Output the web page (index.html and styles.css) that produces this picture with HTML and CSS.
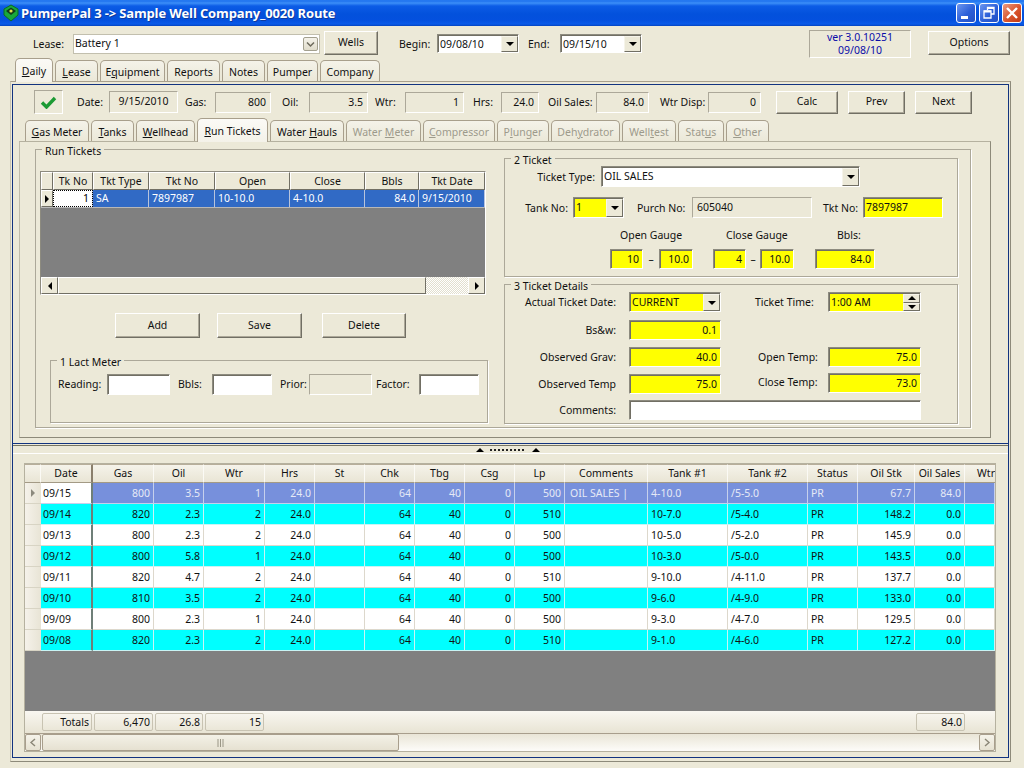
FILE: index.html
```html
<!DOCTYPE html>
<html lang="en">
<head>
<meta charset="utf-8">
<title>PumperPal 3</title>
<link rel="stylesheet" href="styles.css">
</head>
<body>
<div class="app">
  <header class="titlebar">
    <svg class="appicon" width="16" height="18" viewBox="0 0 16 18"><path d="M8 1 15 5 15 11 8 17 1 11 1 5Z" fill="#18a83c" stroke="#0b6b24"/><path d="M8 3.5 13 7 8 11 3 7Z" fill="#123a1a"/><circle cx="8" cy="7" r="1.6" fill="#e8e04a"/></svg>
    <span class="title">PumperPal 3 -&gt; Sample Well Company_0020 Route</span>
    <span class="winbtns">
      <span class="winbtn"><svg width="20" height="20" viewBox="0 0 20 20"><rect x="5" y="13" width="7" height="3" fill="#fff"/></svg></span>
      <span class="winbtn"><svg width="20" height="20" viewBox="0 0 20 20"><path d="M8.500 7V4.500H15V11H12.500M5 8H12V15H5Z" fill="none" stroke="#fff" stroke-width="1.300"/><path d="M8.500 5H15M5 8.500H12" stroke="#fff" stroke-width="2"/></svg></span>
      <span class="winbtn close"><svg width="20" height="20" viewBox="0 0 20 20"><path d="M5 5 15 15M15 5 5 15" stroke="#fff" stroke-width="2.400"/></svg></span>
    </span>
  </header>

  <section class="toolbar">
    <span class="lbl w40">Lease:</span>
    <span class="field sunken-xp w247 h20"><span class="val">Battery 1</span><span class="xpdrop"><svg width="9" height="7" viewBox="0 0 9 7"><path d="M1 1.500 4.500 5 8 1.500" fill="none" stroke="#6d6a5c" stroke-width="1.500"/></svg></span></span>
    <button class="btn w54 h24 ml4 up1">Wells</button>
    <span class="lbl w38 ml21">Begin:</span>
    <span class="field sunken w82 h19 up1"><span class="val">09/08/10</span><span class="drop"><i class="tri"></i></span></span>
    <span class="lbl w32 ml9">End:</span>
    <span class="field sunken w82 h19 up1"><span class="val">09/15/10</span><span class="drop"><i class="tri"></i></span></span>
    <div class="version w102 ml167">ver 3.0.10251<br>09/08/10</div>
    <button class="btn w82 h24 ml17 up1">Options</button>
  </section>

  <nav class="tabs main-tabs">
    <span class="tab active w38"><u>D</u>aily</span>
    <span class="tab w43"><u>L</u>ease</span>
    <span class="tab w65">E<u>q</u>uipment</span>
    <span class="tab w53">Reports</span>
    <span class="tab w43">Notes</span>
    <span class="tab w51">Pumper</span>
    <span class="tab w60">Company</span>
  </nav>

  <main class="outer">
    <div class="blue">
      <section class="upper">
        <div class="summary">
          <span class="checkbox"><svg width="17" height="14" viewBox="0 0 17 14"><path d="M2 7.500 6.500 12 15 3" fill="none" stroke="#1c9a34" stroke-width="3.400"/></svg></span>
          <span class="lbl w32 ml14">Date:</span><span class="ro w69 h22 ctr">9/15/2010</span>
          <span class="lbl w30 ml7">Gas:</span><span class="ro w56 h21 num">800</span>
          <span class="lbl w27 ml11">Oil:</span><span class="ro w59 h21 num">3.5</span>
          <span class="lbl w30 ml7">Wtr:</span><span class="ro w59 h21 num">1</span>
          <span class="lbl w28 ml9">Hrs:</span><span class="ro w38 h21 num">24.0</span>
          <span class="lbl w48 ml9">Oil Sales:</span><span class="ro w53 h21 num">84.0</span>
          <span class="lbl w48 ml11">Wtr Disp:</span><span class="ro w53 h21 num">0</span>
          <button class="btn w62 h23 ml15">Calc</button>
          <button class="btn w57 h23 ml10">Prev</button>
          <button class="btn w57 h23 ml10">Next</button>
        </div>

        <nav class="tabs sub-tabs">
          <span class="tab w64"><u>G</u>as Meter</span>
          <span class="tab w43"><u>T</u>anks</span>
          <span class="tab w59"><u>W</u>ellhead</span>
          <span class="tab active w71"><u>R</u>un Tickets</span>
          <span class="tab w74">Water <u>H</u>auls</span>
          <span class="tab off w75">Water <u>M</u>eter</span>
          <span class="tab off w72"><u>C</u>ompressor</span>
          <span class="tab off w52">P<u>l</u>unger</span>
          <span class="tab off w69">Deh<u>y</u>drator</span>
          <span class="tab off w54">Well<u>t</u>est</span>
          <span class="tab off w46">Stat<u>u</u>s</span>
          <span class="tab off w43"><u>O</u>ther</span>
        </nav>

        <div class="page">
          <div class="group run-group">
            <span class="legend">Run Tickets</span>
            <div class="run-left">
              <div class="ticket-grid">
                <div class="tg-row tg-head">
                  <span class="hcell"></span><span class="hcell">Tk No</span><span class="hcell">Tkt Type</span><span class="hcell">Tkt No</span><span class="hcell">Open</span><span class="hcell">Close</span><span class="hcell">Bbls</span><span class="hcell">Tkt Date</span>
                </div>
                <div class="tg-row tg-sel">
                  <span class="hcell"><i class="tri-r"></i></span><span class="cell focus n">1</span><span class="cell">SA</span><span class="cell">7897987</span><span class="cell">10-10.0</span><span class="cell">4-10.0</span><span class="cell n">84.0</span><span class="cell">9/15/2010</span>
                </div>
                <div class="empty"></div>
                <div class="classic-scroll">
                  <span class="sb-btn"><i class="tri-l"></i></span>
                  <span class="sb-thumb"></span>
                  <span class="sb-track"></span>
                  <span class="sb-btn"><i class="tri-r"></i></span>
                </div>
              </div>
              <div class="actions">
                <button class="btn w85 h25 ml75">Add</button>
                <button class="btn w85 h25 ml17">Save</button>
                <button class="btn w84 h25 ml20">Delete</button>
              </div>
              <div class="group lact-group">
                <span class="legend">1 Lact Meter</span>
                <div class="lact-row">
                  <span class="lbl w49">Reading:</span><span class="field sunken w63 h21"></span>
                  <span class="lbl w34 ml8">Bbls:</span><span class="field sunken w60 h21"></span>
                  <span class="lbl w29 ml8">Prior:</span><span class="ro w63 h21"></span>
                  <span class="lbl w43 ml4">Factor:</span><span class="field sunken w60 h21"></span>
                </div>
              </div>
            </div>

            <div class="run-right">
              <div class="group ticket-group">
                <span class="legend">2 Ticket</span>
                <div class="frow mt7">
                  <span class="lbl rt w96">Ticket Type:</span>
                  <span class="field sunken w259 h21"><span class="val">OIL SALES</span><span class="drop"><i class="tri"></i></span></span>
                </div>
                <div class="frow mt10">
                  <span class="lbl rt w68">Tank No:</span>
                  <span class="field sunken yellow w51 h21"><span class="val">1</span><span class="drop"><i class="tri"></i></span></span>
                  <span class="lbl w55 ml13">Purch No:</span><span class="ro w120 h21 txt">605040</span>
                  <span class="lbl w40 ml11">Tkt No:</span><span class="field sunken yellow w80 h21"><span class="val">7897987</span></span>
                </div>
                <div class="gauge-labels">
                  <span class="lbl w106">Open Gauge</span><span class="lbl w111">Close Gauge</span><span class="lbl">Bbls:</span>
                </div>
                <div class="gauge-inputs">
                  <span class="field sunken yellow w33 h20 n"><span class="val">10</span></span><span class="dash w16">–</span>
                  <span class="field sunken yellow w34 h20 n"><span class="val">10.0</span></span>
                  <span class="field sunken yellow w33 h20 ml20 n"><span class="val">4</span></span><span class="dash w14">–</span>
                  <span class="field sunken yellow w34 h20 n"><span class="val">10.0</span></span>
                  <span class="field sunken yellow w60 h20 ml21 n"><span class="val">84.0</span></span>
                </div>
              </div>
              <div class="group details-group">
                <span class="legend">3 Ticket Details</span>
                <div class="frow h20 mt7">
                  <span class="lbl rt w124">Actual Ticket Date:</span>
                  <span class="field sunken yellow w92 h20"><span class="val">CURRENT</span><span class="drop"><i class="tri"></i></span></span>
                  <span class="lbl w73 ml34">Ticket Time:</span>
                  <span class="field sunken yellow w93 h20"><span class="val">1:00 AM</span><span class="spin"><b class="sp"><i class="tri-u"></i></b><b class="sp"><i class="tri"></i></b></span></span>
                </div>
                <div class="frow h20 mt8">
                  <span class="lbl rt w124">Bs&amp;w:</span>
                  <span class="field sunken yellow w92 h20 n"><span class="val">0.1</span></span>
                </div>
                <div class="frow h20 mt7">
                  <span class="lbl rt w124">Observed Grav:</span>
                  <span class="field sunken yellow w92 h20 n"><span class="val">40.0</span></span>
                  <span class="lbl w70 ml37">Open Temp:</span>
                  <span class="field sunken yellow w93 h20 n"><span class="val">75.0</span></span>
                </div>
                <div class="frow h20 mt7">
                  <span class="lbl rt w124">Observed Temp</span>
                  <span class="field sunken yellow w92 h20 n"><span class="val">75.0</span></span>
                  <span class="lbl w70 ml37 up3">Close Temp:</span>
                  <span class="field sunken yellow w93 h20 n up1"><span class="val">73.0</span></span>
                </div>
                <div class="frow h20 mt6">
                  <span class="lbl rt w124">Comments:</span>
                  <span class="field sunken w292 h20"></span>
                </div>
              </div>
            </div>
          </div>
        </div>
      </section>

      <div class="splitter"><i class="tri-u"></i><span class="dots"></span><i class="tri-u"></i></div>

      <section class="lower">
        <div class="daily-grid">
          <div class="dg-row dg-head">
            <span class="dh"></span><span class="dh frozen">Date</span><span class="dh">Gas</span><span class="dh">Oil</span><span class="dh">Wtr</span><span class="dh">Hrs</span><span class="dh">St</span><span class="dh">Chk</span><span class="dh">Tbg</span><span class="dh">Csg</span><span class="dh">Lp</span><span class="dh">Comments</span><span class="dh">Tank #1</span><span class="dh">Tank #2</span><span class="dh">Status</span><span class="dh">Oil Stk</span><span class="dh">Oil Sales</span><span class="dh cut">Wtr</span>
          </div>
          <div class="dg-row sel">
            <span class="rh"><i class="tri-r grey"></i></span><span class="dc date">09/15</span><span class="dc n">800</span><span class="dc n">3.5</span><span class="dc n">1</span><span class="dc n">24.0</span><span class="dc"></span><span class="dc n">64</span><span class="dc n">40</span><span class="dc n">0</span><span class="dc n">500</span><span class="dc comment">OIL SALES |</span><span class="dc">4-10.0</span><span class="dc">/5-5.0</span><span class="dc">PR</span><span class="dc n">67.7</span><span class="dc n">84.0</span><span class="dc"></span>
          </div>
          <div class="dg-row cyan">
            <span class="rh"></span><span class="dc date">09/14</span><span class="dc n">820</span><span class="dc n">2.3</span><span class="dc n">2</span><span class="dc n">24.0</span><span class="dc"></span><span class="dc n">64</span><span class="dc n">40</span><span class="dc n">0</span><span class="dc n">510</span><span class="dc"></span><span class="dc">10-7.0</span><span class="dc">/5-4.0</span><span class="dc">PR</span><span class="dc n">148.2</span><span class="dc n">0.0</span><span class="dc"></span>
          </div>
          <div class="dg-row">
            <span class="rh"></span><span class="dc date">09/13</span><span class="dc n">800</span><span class="dc n">2.3</span><span class="dc n">2</span><span class="dc n">24.0</span><span class="dc"></span><span class="dc n">64</span><span class="dc n">40</span><span class="dc n">0</span><span class="dc n">500</span><span class="dc"></span><span class="dc">10-5.0</span><span class="dc">/5-2.0</span><span class="dc">PR</span><span class="dc n">145.9</span><span class="dc n">0.0</span><span class="dc"></span>
          </div>
          <div class="dg-row cyan">
            <span class="rh"></span><span class="dc date">09/12</span><span class="dc n">800</span><span class="dc n">5.8</span><span class="dc n">1</span><span class="dc n">24.0</span><span class="dc"></span><span class="dc n">64</span><span class="dc n">40</span><span class="dc n">0</span><span class="dc n">500</span><span class="dc"></span><span class="dc">10-3.0</span><span class="dc">/5-0.0</span><span class="dc">PR</span><span class="dc n">143.5</span><span class="dc n">0.0</span><span class="dc"></span>
          </div>
          <div class="dg-row">
            <span class="rh"></span><span class="dc date">09/11</span><span class="dc n">820</span><span class="dc n">4.7</span><span class="dc n">2</span><span class="dc n">24.0</span><span class="dc"></span><span class="dc n">64</span><span class="dc n">40</span><span class="dc n">0</span><span class="dc n">510</span><span class="dc"></span><span class="dc">9-10.0</span><span class="dc">/4-11.0</span><span class="dc">PR</span><span class="dc n">137.7</span><span class="dc n">0.0</span><span class="dc"></span>
          </div>
          <div class="dg-row cyan">
            <span class="rh"></span><span class="dc date">09/10</span><span class="dc n">810</span><span class="dc n">3.5</span><span class="dc n">2</span><span class="dc n">24.0</span><span class="dc"></span><span class="dc n">64</span><span class="dc n">40</span><span class="dc n">0</span><span class="dc n">500</span><span class="dc"></span><span class="dc">9-6.0</span><span class="dc">/4-9.0</span><span class="dc">PR</span><span class="dc n">133.0</span><span class="dc n">0.0</span><span class="dc"></span>
          </div>
          <div class="dg-row">
            <span class="rh"></span><span class="dc date">09/09</span><span class="dc n">800</span><span class="dc n">2.3</span><span class="dc n">1</span><span class="dc n">24.0</span><span class="dc"></span><span class="dc n">64</span><span class="dc n">40</span><span class="dc n">0</span><span class="dc n">500</span><span class="dc"></span><span class="dc">9-3.0</span><span class="dc">/4-7.0</span><span class="dc">PR</span><span class="dc n">129.5</span><span class="dc n">0.0</span><span class="dc"></span>
          </div>
          <div class="dg-row cyan">
            <span class="rh"></span><span class="dc date">09/08</span><span class="dc n">820</span><span class="dc n">2.3</span><span class="dc n">2</span><span class="dc n">24.0</span><span class="dc"></span><span class="dc n">64</span><span class="dc n">40</span><span class="dc n">0</span><span class="dc n">510</span><span class="dc"></span><span class="dc">9-1.0</span><span class="dc">/4-6.0</span><span class="dc">PR</span><span class="dc n">127.2</span><span class="dc n">0.0</span><span class="dc"></span>
          </div>
          <div class="empty"></div>
          <div class="dg-row totals">
            <span></span><span class="tot">Totals</span><span class="tot">6,470</span><span class="tot">26.8</span><span class="tot">15</span><span class="tot sales">84.0</span>
          </div>
          <div class="xp-scroll">
            <span class="xp-btn"><svg width="8" height="9" viewBox="0 0 8 9"><path d="M6 1 2 4.500 6 8" fill="none" stroke="#8a8676" stroke-width="1.400"/></svg></span>
            <span class="xp-thumb"><svg width="7" height="8" viewBox="0 0 7 8"><path d="M1 0V8M3.500 0V8M6 0V8" stroke="#9a9686"/></svg></span>
            <span class="xp-track"></span>
            <span class="xp-btn"><svg width="8" height="9" viewBox="0 0 8 9"><path d="M2 1 6 4.500 2 8" fill="none" stroke="#8a8676" stroke-width="1.400"/></svg></span>
          </div>
        </div>
      </section>
    </div>
  </main>
</div>
</body>
</html>
```

FILE: styles.css
```css
* { box-sizing: border-box; }
html, body { margin: 0; padding: 0; height: 100%; overflow: hidden; }
body { background: #ece9d8; color: #111; font: 10.5px/14px "Noto Sans", "Liberation Sans", sans-serif; }
.app { width: 1024px; height: 768px; display: flex; flex-direction: column; overflow: hidden; }
i { display: block; font-style: normal; }
u { text-underline-offset: 1px; }

/* width / height / margin helpers */
.w14{width:14px}.w16{width:16px}.w27{width:27px}.w28{width:28px}.w29{width:29px}.w30{width:30px}.w32{width:32px}.w33{width:33px}.w34{width:34px}.w38{width:38px}.w40{width:40px}.w43{width:43px}.w46{width:46px}.w48{width:48px}.w49{width:49px}.w51{width:51px}.w52{width:52px}.w53{width:53px}.w54{width:54px}.w55{width:55px}.w56{width:56px}.w57{width:57px}.w59{width:59px}.w60{width:60px}.w62{width:62px}.w63{width:63px}.w64{width:64px}.w65{width:65px}.w68{width:68px}.w69{width:69px}.w70{width:70px}.w71{width:71px}.w72{width:72px}.w73{width:73px}.w74{width:74px}.w75{width:75px}.w80{width:80px}.w82{width:82px}.w84{width:84px}.w85{width:85px}.w92{width:92px}.w93{width:93px}.w96{width:96px}.w102{width:102px}.w106{width:106px}.w111{width:111px}.w120{width:120px}.w124{width:124px}.w247{width:247px}.w259{width:259px}.w292{width:292px}
.h19{height:19px}.h20{height:20px}.h21{height:21px}.h22{height:22px}.h23{height:23px}.h24{height:24px}.h25{height:25px}
.ml4{margin-left:4px}.ml7{margin-left:7px}.ml8{margin-left:8px}.ml9{margin-left:9px}.ml10{margin-left:10px}.ml11{margin-left:11px}.ml13{margin-left:13px}.ml14{margin-left:14px}.ml15{margin-left:15px}.ml17{margin-left:17px}.ml20{margin-left:20px}.ml21{margin-left:21px}.ml34{margin-left:34px}.ml37{margin-left:37px}.ml75{margin-left:75px}.ml167{margin-left:167px}
.mt6{margin-top:6px}.mt7{margin-top:7px}.mt8{margin-top:8px}.mt10{margin-top:10px}
.up1{margin-bottom:2px}.up3{margin-bottom:5px}

/* title bar */
.titlebar { height: 26px; flex: none; display: flex; align-items: center; padding: 0 2px 1px 3px; color: #fff;
  background: linear-gradient(#2a7ef2 0, #1f72ee 1px, #3c8ff8 3px, #0c5ce6 6px, #0351dc 14px, #0450de 20px, #0a5ae8 24px, #0344c0 26px); }
.appicon { flex: none; }
.title { margin-left: 2px; font: bold 13px/18px "Open Sans", "Liberation Sans", sans-serif; letter-spacing: -.15px; white-space: nowrap; text-shadow: 1px 1px 0 #0f3a9c; }
.winbtns { margin-left: auto; display: flex; gap: 3px; }
.winbtn { width: 20px; height: 20px; border: 1px solid #fff; border-radius: 3px; background: linear-gradient(135deg, #6d97f0, #2c5fd8 55%, #2250c4); display: block; overflow: hidden; }
.winbtn svg { display: block; margin: -1px; }
.winbtn.close { background: linear-gradient(135deg, #ea9a80, #d9542c 55%, #c23a14); }

/* top tool bar */
.toolbar { height: 36px; margin-bottom: -3px; flex: none; display: flex; align-items: center; padding-left: 33px; }
.lbl { display: block; flex: none; white-space: nowrap; }
.lbl.rt { text-align: right; padding-right: 13px; }
.frow .lbl.w96 { padding-right: 6px; }
.frow .lbl.w68 { padding-right: 5px; }
.btn { display: block; flex: none; margin-top: 0; margin-right: 0; padding: 0 0 2px; font: inherit; color: inherit; background: #ece9d8; border: 1px solid; border-color: #fff #716f64 #716f64 #fff; box-shadow: inset -1px -1px 0 #aca899; border-radius: 0; }
.field { display: flex; flex: none; align-items: stretch; background: #fff; border: 1px solid; border-color: #8d8b7f #fff #fff #8d8b7f; box-shadow: inset 1px 1px 0 #716f64; padding: 1px 0 0 1px; overflow: hidden; }
.field.yellow { background: #ffff00; }
.sunken-xp { border: 1px solid #c2bfae; box-shadow: none; padding: 0; }
.val { flex: 1; min-width: 0; padding: 0 2px 0 1px; line-height: 16px; white-space: nowrap; }
.field.n .val { text-align: right; padding-right: 3px; }
.drop { flex: none; width: 17px; display: flex; align-items: center; justify-content: center; background: #ece9d8; border: 1px solid; border-color: #f6f4ea #716f64 #716f64 #f6f4ea; }
.xpdrop { flex: none; width: 15px; margin: 2px 1px 2px 0; display: flex; align-items: center; justify-content: center; background: linear-gradient(#f4f2ea, #e0dccb); border: 1px solid #a3a08f; border-radius: 2px; }
.spin { flex: none; width: 17px; display: flex; flex-direction: column; background: #ece9d8; }
.sp { flex: 1; display: flex; align-items: center; justify-content: center; border: 1px solid; border-color: #f6f4ea #716f64 #716f64 #f6f4ea; }
.tri { width: 0; height: 0; border: 4px solid transparent; border-top-color: #000; border-bottom: 0; }
.tri-u { width: 0; height: 0; border: 4px solid transparent; border-bottom-color: #000; border-top: 0; }
.tri-r { width: 0; height: 0; border: 4px solid transparent; border-left-color: #000; border-right: 0; }
.tri-l { width: 0; height: 0; border: 4px solid transparent; border-right-color: #000; border-left: 0; }
.tri-r.grey { border-left-color: #8c8a7e; }
.ro { display: block; flex: none; border: 1px solid; border-color: #aca899 #fff #fff #aca899; line-height: 19px; white-space: nowrap; padding: 0 4px; }
.ro.num { text-align: right; }
.ro.ctr { text-align: center; }
.version { height: 28px; flex: none; border: 1px solid; border-color: #aca899 #fff #fff #aca899; color: #0b0ba8; text-align: center; line-height: 13px; padding-top: 0; }

/* tabs */
.tabs { display: flex; align-items: flex-end; gap: 2px; flex: none; height: 22px; position: relative; z-index: 1; }
.main-tabs { padding-left: 15px; }
.sub-tabs { padding-left: 12px; }
.tab { display: block; flex: none; height: 21px; text-align: center; line-height: 22px; white-space: nowrap; background: linear-gradient(#f4f2e9, #ebe8d8); border: 1px solid #a89f8c; border-bottom: 0; border-radius: 5px 5px 0 0; }
.tab.active { height: 24px; margin-bottom: -1px; line-height: 24px; background: linear-gradient(#fbfaf6, #f4f2e9); border-color: #a89f8c; }
.tab.off { color: #9d9a8b; }
.tab.off u { text-decoration-color: #9d9a8b; }

/* outer frames */
.outer { margin-left: 10px; width: 1001px; height: 681px; flex: none; padding: 2px 1px 3px; border: 1px solid; border-color: #a89f8c #8d8a7a #8d8a7a #c8c4b2; }
.blue { height: 100%; border: 1px solid #12337f; display: flex; flex-direction: column; }
.upper { height: 359px; flex: none; border-bottom: 1px solid #12337f; }
.summary { height: 34px; display: flex; align-items: center; padding-left: 21px; }
.checkbox { width: 29px; height: 24px; flex: none; display: flex; align-items: center; justify-content: center; border: 1px solid; border-color: #aca899 #fff #fff #aca899; }
.page { margin-left: 6px; width: 972px; height: 297px; border: 1px solid; border-color: #b5b19f #8d8a7a #8d8a7a #c0bcaa; padding: 7px 0 0 15px; }
.group { position: relative; border: 1px solid #aca899; box-shadow: 1px 1px 0 #fff; }
.legend { position: absolute; top: -6px; left: 6px; padding: 0 3px; background: #ece9d8; white-space: nowrap; }
.run-group { width: 936px; height: 279px; display: flex; }
.run-left { width: 468px; flex: none; padding: 21px 0 0 4px; }
.run-right { flex: none; padding-top: 8px; }

/* ticket grid */
.ticket-grid { width: 446px; height: 124px; display: flex; flex-direction: column; border: 1px solid; border-color: #8d8b7f #fff #fff #8d8b7f; background: #808080; }
.tg-row { display: grid; grid-template-columns: 12px 40px 56px 66px 75px 75px 54px 66px; flex: none; }
.tg-head { height: 18px; }
.hcell { display: flex; align-items: center; justify-content: center; background: #ece9d8; border: 1px solid; border-color: #fff #716f64 #716f64 #fff; line-height: 14px; }
.tg-sel { height: 18px; background: #316ac5; color: #fff; border-bottom: 1px solid #b8b8b8; }
.tg-sel .hcell { background: #ece9d8; }
.cell { padding: 0 3px; border-right: 1px solid #b8c4dc; line-height: 17px; white-space: nowrap; overflow: hidden; }
.cell.n { text-align: right; }
.cell.focus { background: #fff; color: #000; outline: 1px dotted #000; outline-offset: -1px; }
.empty { flex: 1; background: #808080; }
.classic-scroll { height: 17px; flex: none; display: flex; background: #ece9d8; }
.sb-btn { width: 17px; flex: none; display: flex; align-items: center; justify-content: center; background: #ece9d8; border: 1px solid; border-color: #fff #716f64 #716f64 #fff; }
.sb-thumb { width: 368px; flex: none; background: #ece9d8; border: 1px solid; border-color: #fff #716f64 #716f64 #fff; }
.sb-track { flex: 1; background: repeating-conic-gradient(#fff 0 25%, #e2dfce 0 50%) 0 0 / 2px 2px; }
.actions { display: flex; margin-top: 18px; height: 25px; }
.lact-group { margin: 22px 0 0 10px; width: 438px; height: 63px; }
.lact-row { display: flex; align-items: center; height: 21px; margin-top: 13px; padding-left: 7px; }
.lact-row .lbl { line-height: 21px; }

/* right column */
.ticket-group { width: 454px; height: 119px; }
.details-group { width: 454px; height: 140px; margin-top: 7px; }
.frow { display: flex; align-items: center; }
.gauge-labels { display: flex; height: 14px; margin-top: 10px; padding-left: 115px; }
.gauge-inputs { display: flex; margin-top: 7px; padding-left: 105px; height: 20px; }
.dash { display: block; flex: none; text-align: center; line-height: 20px; }

/* splitter */
.splitter { height: 9px; margin-top: 1px; flex: none; display: flex; align-items: center; justify-content: center; gap: 6px; padding-right: 6px; border-top: 1px solid #777563; border-bottom: 1px solid #fff; }
.dots { width: 36px; height: 2px; background: repeating-linear-gradient(90deg, #222 0 2px, transparent 2px 4px); }

/* daily grid */
.lower { flex: 1; padding: 9px 0 0 11px; min-height: 0; }
.daily-grid { width: 972px; height: 289px; display: flex; flex-direction: column; border: 1px solid #b5b19f; background: #808080; }
.dg-row { display: grid; flex: none; height: 21px; grid-template-columns: 16px 52px 61px 50px 61px 50px 50px 50px 50px 50px 50px 83px 80px 80px 50px 57px 50px 30px; background: #fff; }
.dg-head { height: 19px; background: #ece9d8; }
.dh { display: block; text-align: center; line-height: 17px; white-space: nowrap; overflow: hidden; background: linear-gradient(#f5f3ea, #e9e5d5); border-top: 1px solid #b7ae9a; border-bottom: 1px solid #a39a85; border-right: 1px solid #fbfaf5; }
.dh.frozen { border-right: 2px solid #8a7f6c; }
.dh.cut { text-align: right; border-right: 0; }
.rh { display: flex; align-items: center; justify-content: center; background: linear-gradient(90deg, #f5f2ea, #e8e4d5); border-bottom: 1px solid #d8d4c4; }
.dc { display: block; padding: 0 3px; line-height: 21px; white-space: nowrap; overflow: hidden; border-right: 1px solid #ddd8cc; border-bottom: 1px solid #ddd8cc; }
.dc.n { text-align: right; }
.dc.comment { padding-left: 5px; }
.dc.date { background: #fff; border-right: 2px solid #6f7f78; padding-left: 2px; }
.cyan { background: #00ffff; }
.cyan .dc { border-color: #c8f4f4; }
.cyan .dc.date { background: #00ffff; border-right-color: #6f7f78; }
.sel { background: #7790dc; color: #e6eaf6; }
.sel .dc { border-color: #c6d0ec; }
.sel .dc.date { color: #111; border-right-color: #6f7f78; }
.totals { height: 23px; background: linear-gradient(#f9f7f1, #e8e4d4); border-bottom: 1px solid #a89e8c; align-items: center; }
.totals .tot { display: block; height: 18px; margin: 0 1px; text-align: right; padding: 0 2px; line-height: 17px; border: 1px solid #c8c3b2; border-radius: 2px; }
.totals .tot.sales { grid-column: 17; margin: 0 0 0 1px; }
.xp-scroll { height: 17px; flex: none; display: flex; gap: 1px; background: linear-gradient(#e9e5d6, #fdfcf9); }
.xp-btn { width: 16px; flex: none; display: flex; align-items: center; justify-content: center; background: linear-gradient(#f5f3ea, #e6e2d2); border: 1px solid #a89e8c; border-radius: 2px; }
.xp-thumb { width: 357px; flex: none; display: flex; align-items: center; justify-content: center; background: linear-gradient(#f3f1e7, #e6e1d1); border: 1px solid #a89e8c; border-radius: 2px; }
.xp-track { flex: 1; }
```
